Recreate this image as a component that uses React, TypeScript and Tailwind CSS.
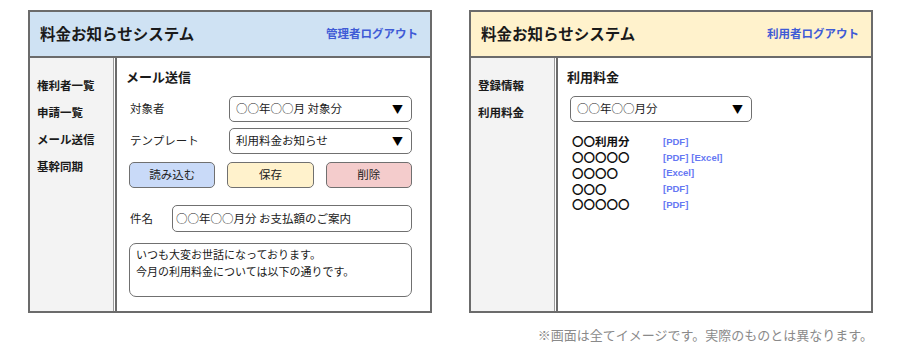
import React from 'react';

const jp = { fontFamily: '"Noto Sans CJK JP", "Noto Sans", sans-serif' };

interface PanelProps {
  headerBg: string;
  logout: string;
  nav: string[];
  children: React.ReactNode;
}

function Panel({ headerBg, logout, nav, children }: PanelProps) {
  return (
    <div className="w-[404px] h-[303px] border-2 border-[#6b6b6b] flex flex-col bg-white">
      {/* Header */}
      <div className={`h-[46px] shrink-0 border-b-2 border-[#6b6b6b] flex items-center justify-between pl-[10px] pr-[12px] ${headerBg}`}>
        <span className="text-[15.5px] font-bold text-[#1a1a1a]">料金お知らせシステム</span>
        <span className="text-[11.5px] font-bold text-[#3f5bd6]">{logout}</span>
      </div>

      {/* Body */}
      <div className="flex-1 flex min-h-0">
        <div className="w-[84px] shrink-0 bg-[#f3f3f3] border-r border-[#9a9a9a] flex flex-col gap-[11px] pt-[19px] pl-[7px]">
          {nav.map((n) => (
            <span key={n} className="text-[11.5px] font-bold leading-[16px] text-[#1a1a1a]">
              {n}
            </span>
          ))}
        </div>
        <div className="flex-1 ml-[1px] border-l-2 border-[#6b6b6b] flex flex-col pt-[10px] pl-[9px] pr-[18px]">
          {children}
        </div>
      </div>
    </div>
  );
}

function Select({ value, className }: { value: string; className: string }) {
  return (
    <div className={`h-[26px] rounded-[5px] border-[1.5px] border-[#707070] bg-white flex items-center justify-between pl-[6px] pr-[8px] ${className}`}>
      <span className="text-[11.5px] text-[#1a1a1a]">{value}</span>
      <span className="text-[11px] text-black">▼</span>
    </div>
  );
}

const fees: [string, string[]][] = [
  ['〇〇利用分', ['[PDF]']],
  ['〇〇〇〇〇', ['[PDF]', '[Excel]']],
  ['〇〇〇〇', ['[Excel]']],
  ['〇〇〇', ['[PDF]']],
  ['〇〇〇〇〇', ['[PDF]']],
];

export default function App() {
  return (
    <div className="w-[900px] h-[360px] bg-white" style={jp}>
      <div className="flex gap-[37px] pl-[28px] pt-[10px]">
        {/* Admin screen */}
        <Panel headerBg="bg-[#cfe2f3]" logout="管理者ログアウト" nav={['権利者一覧', '申請一覧', 'メール送信', '基幹同期']}>
          <h3 className="text-[13px] font-bold leading-[18px] text-[#1a1a1a]">メール送信</h3>
          <div className="pl-[3px] flex flex-col">
            <div className="flex items-center mt-[10px]">
              <span className="w-[100px] pl-[1px] text-[11.5px] text-[#222]">対象者</span>
              <Select value="○○年○○月 対象分" className="flex-1" />
            </div>
            <div className="flex items-center mt-[6px]">
              <span className="w-[100px] pl-[1px] text-[11.5px] text-[#222]">テンプレート</span>
              <Select value="利用料金お知らせ" className="flex-1" />
            </div>
            <div className="grid grid-cols-3 gap-[12px] mt-[8px]">
              <div className="h-[26px] rounded-[5px] border-[1.5px] border-[#707070] bg-[#c9daf8] flex items-center justify-center text-[11.5px] text-[#222]">読み込む</div>
              <div className="h-[26px] rounded-[5px] border-[1.5px] border-[#707070] bg-[#fff2cc] flex items-center justify-center text-[11.5px] text-[#222]">保存</div>
              <div className="h-[26px] rounded-[5px] border-[1.5px] border-[#707070] bg-[#f4cccc] flex items-center justify-center text-[11.5px] text-[#222]">削除</div>
            </div>
            <div className="flex items-center mt-[17px]">
              <span className="w-[43px] pl-[1px] text-[11.5px] text-[#222]">件名</span>
              <div className="flex-1 h-[27px] rounded-[5px] border-[1.5px] border-[#707070] flex items-center pl-[3px] text-[11.5px] text-[#1a1a1a]">
                ○○年○○月分 お支払額のご案内
              </div>
            </div>
            <div className="mt-[11px] h-[54px] rounded-[7px] border-[1.5px] border-[#707070] pl-[6px] pt-[2px] text-[11px] leading-[16.5px] text-[#1a1a1a]">
              <p>いつも大変お世話になっております。</p>
              <p>今月の利用料金については以下の通りです。</p>
            </div>
          </div>
        </Panel>

        {/* User screen */}
        <div className="flex flex-col">
          <Panel headerBg="bg-[#fff2cc]" logout="利用者ログアウト" nav={['登録情報', '利用料金']}>
            <h3 className="text-[13px] font-bold leading-[18px] text-[#1a1a1a]">利用料金</h3>
            <div className="pl-[3px]">
              <Select value="○○年○○月分" className="w-[182px] mt-[10px]" />
              <div className="mt-[12px] pl-[2px] flex flex-col">
                {fees.map(([name, links], i) => (
                  <div key={i} className="flex items-center h-[15.8px]">
                    <span className="w-[91px] text-[11.5px] font-bold text-[#111]">{name}</span>
                    <span className="flex gap-[3px] text-[9.5px] font-bold text-[#6577f3]" style={{ fontFamily: '"Liberation Sans", Arial, sans-serif' }}>
                      {links.map((l) => (
                        <span key={l}>{l}</span>
                      ))}
                    </span>
                  </div>
                ))}
              </div>
            </div>
          </Panel>
          <p className="mt-[12px] text-right text-[13px] text-[#8a8a8a]">※画面は全てイメージです。実際のものとは異なります。</p>
        </div>
      </div>
    </div>
  );
}
